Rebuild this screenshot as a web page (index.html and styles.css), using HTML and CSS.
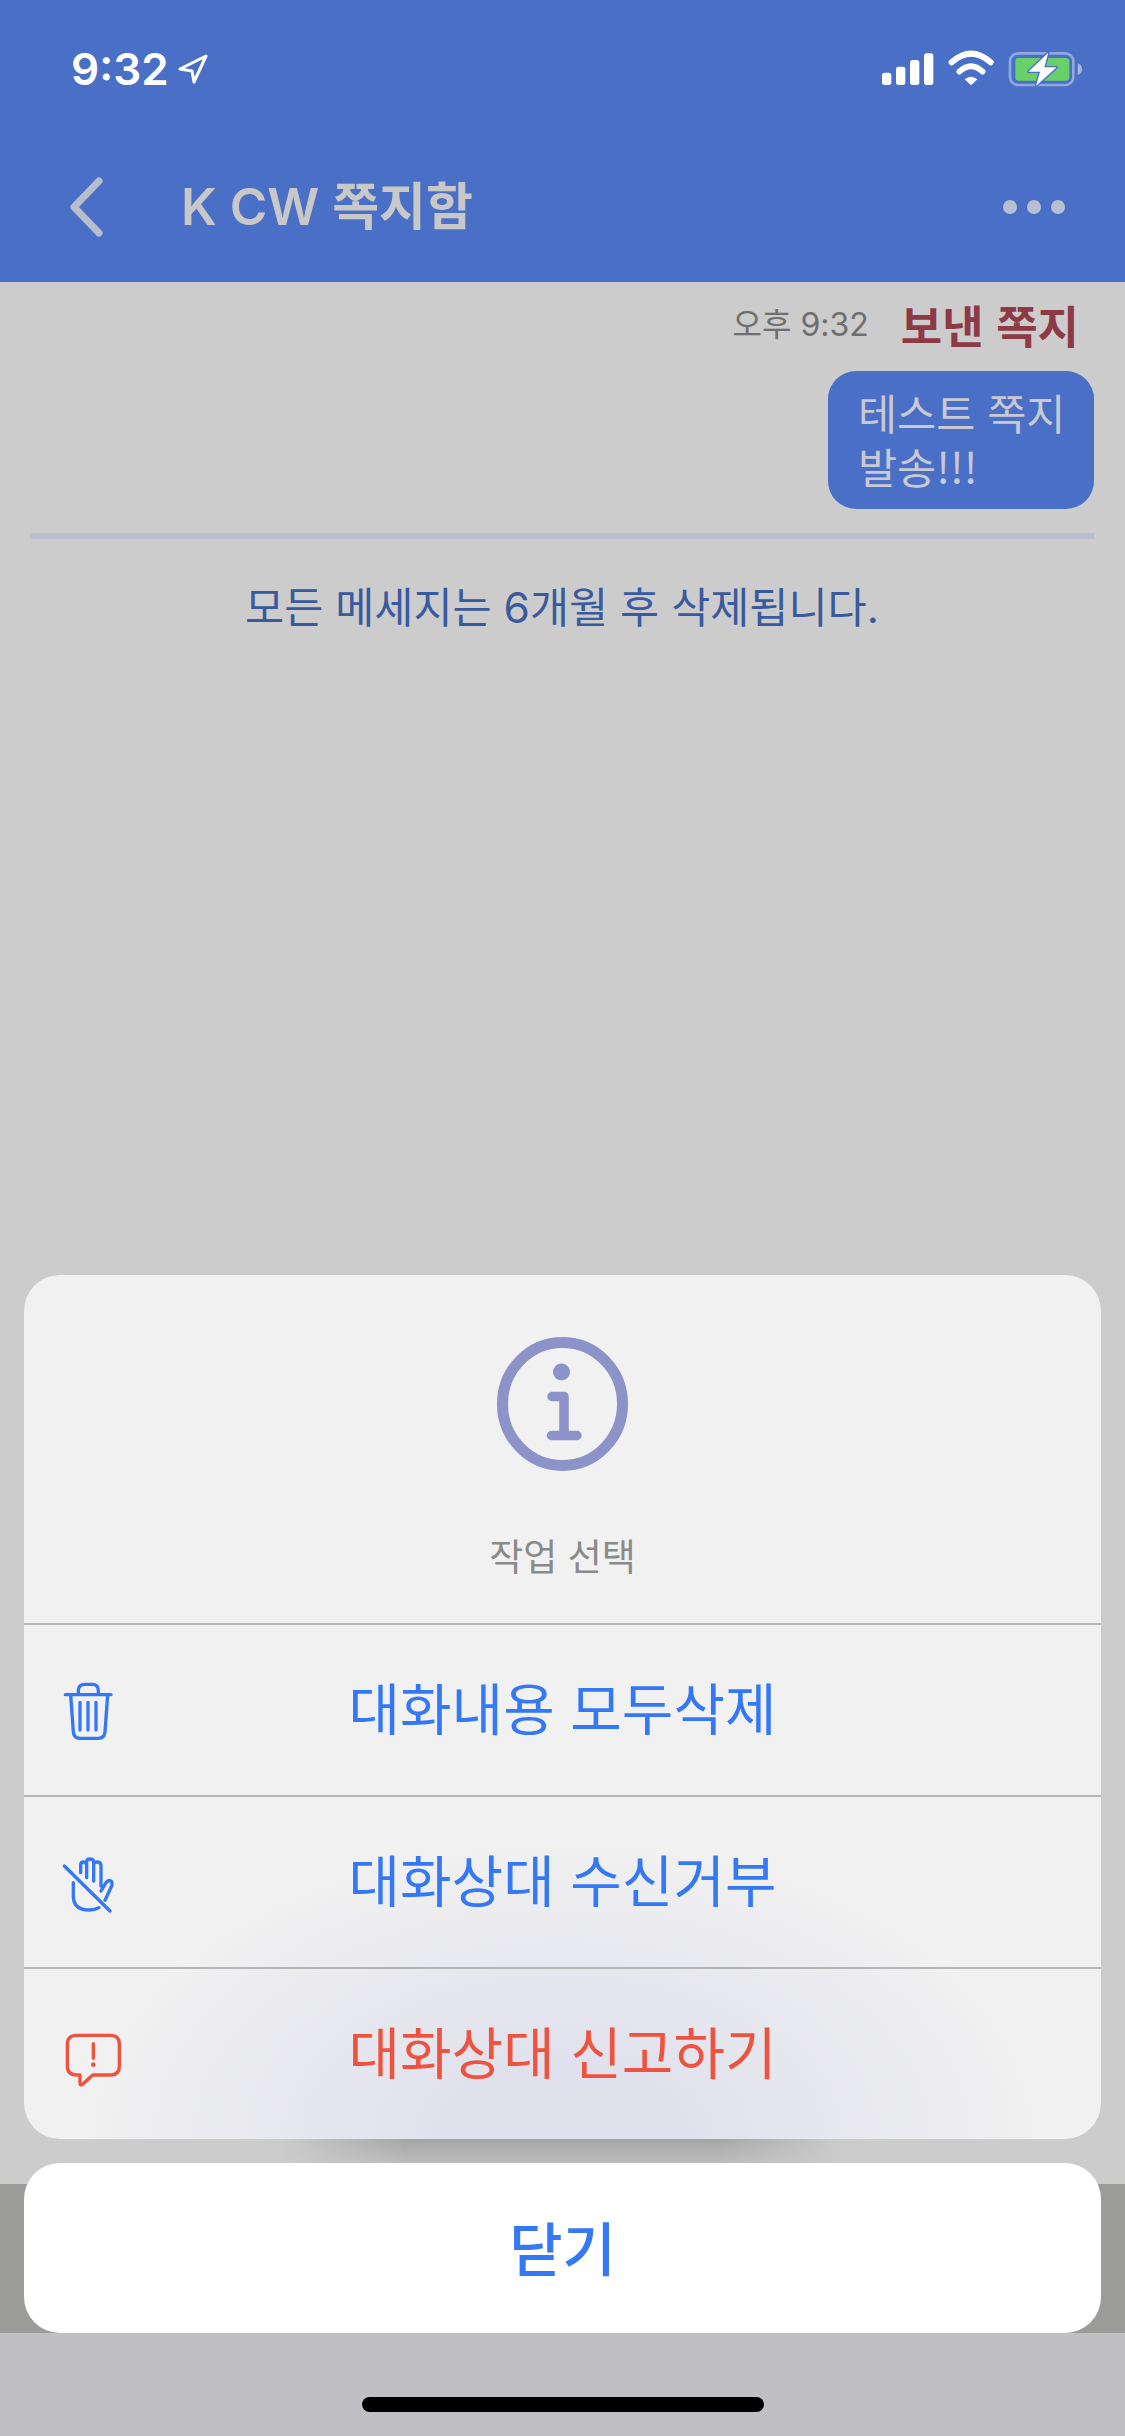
FILE: index.html
```html
<!DOCTYPE html>
<html lang="ko">

<head>
    <meta charset="UTF-8">
    <meta name="viewport" content="width=device-width, initial-scale=1.0">
    <title>K CW 쪽지함</title>
    <link rel="stylesheet" href="styles.css">
</head>

<body>
    <div class="screen">
        <header class="header">
            <div class="status-bar">
                <div class="status-time">
                    <span>9:32</span>
                    <svg class="location" viewBox="0 0 30 30"><path d="M28 2 L2 15 L14 17 L16 28 Z" /></svg>
                </div>
                <svg class="status-icons" viewBox="0 0 720 210">
                    <rect x="66" y="128" width="28" height="37" rx="8" fill="#fff" />
                    <rect x="108" y="110" width="28" height="55" rx="8" fill="#fff" />
                    <rect x="150" y="90" width="28" height="75" rx="8" fill="#fff" />
                    <rect x="192" y="70" width="28" height="95" rx="8" fill="#fff" />
                    <path d="M275 97 Q333 45 392 97" fill="none" stroke="#fff" stroke-width="18" stroke-linecap="round" />
                    <path d="M298 125 Q333 92 368 125" fill="none" stroke="#fff" stroke-width="17" stroke-linecap="round" />
                    <path d="M314 148 Q333 132 352 148 L333 166 Z" fill="#fff" />
                    <rect x="450" y="70" width="190" height="95" rx="24" fill="none" stroke="#fff" stroke-opacity=".4" stroke-width="8" />
                    <rect x="466" y="84" width="162" height="68" rx="10" fill="#68d068" />
                    <path d="M653 100 Q666 105 666 118 Q666 130 653 135 Z" fill="#fff" fill-opacity=".5" />
                    <path d="M565 68 L505 125 L540 125 L528 168 L590 112 L553 112 Z" fill="#fff" stroke="#4a6fc7" stroke-width="8" paint-order="stroke" stroke-linejoin="round" />
                </svg>
            </div>
            <nav class="nav-bar">
                <svg class="back" viewBox="0 0 33 60"><path d="M29 4 L4 30 L29 56" /></svg>
                <h1 class="title">K CW 쪽지함</h1>
                <div class="more"><i></i><i></i><i></i></div>
            </nav>
        </header>

        <main class="content">
            <div class="message-meta">
                <span class="message-time">오후 9:32</span>
                <span class="message-label">보낸 쪽지</span>
            </div>
            <div class="bubble">테스트 쪽지<br>발송!!!</div>
            <div class="divider"></div>
            <p class="notice">모든 메세지는 6개월 후 삭제됩니다.</p>
        </main>

        <div class="band"></div>
        <footer class="home-area"><div class="home-indicator"></div></footer>

        <div class="action-sheet">
            <div class="sheet-panel">
                <div class="sheet-head">
                    <svg class="info-icon" viewBox="0 0 131 134">
                        <ellipse cx="65.5" cy="67" rx="60" ry="61.5" fill="none" stroke="#8b93c8" stroke-width="11" />
                        <circle cx="64.5" cy="35" r="8.5" fill="#8b93c8" />
                        <path d="M55 59.5 H67 V98.5 M54.5 98.5 H80" fill="none" stroke="#8b93c8" stroke-width="9.5" stroke-linecap="round" stroke-linejoin="round" />
                    </svg>
                    <div class="sheet-title">작업 선택</div>
                </div>
                <div class="sheet-row">
                    <svg class="row-icon" viewBox="0 0 360 360">
                        <path d="M106 134 H243 M145 134 V122 Q145 103 165 103 H187 Q205 103 205 122 V134 M122 134 L130 245 Q131 265 150 265 H205 Q224 265 225 245 L233 134 M150 157 V240 M174 157 V240 M198 157 V240" />
                    </svg>
                    <span>대화내용 모두삭제</span>
                </div>
                <div class="sheet-row">
                    <svg class="row-icon" viewBox="0 -27 360 360">
                        <path d="M130 155 V195 Q130 237 178 237 Q195 237 207 230 M152 125 V103 Q152 93 160 93 Q169 93 170 103 V140 M170 103 V92 Q170 84 180 84 Q190 84 191 92 V150 M191 100 Q192 93 202 93 Q212 93 213 103 V165 M213 180 L228 155 Q236 145 243 150 Q248 155 245 165 L225 208 M103 105 L240 240" />
                    </svg>
                    <span>대화상대 수신거부</span>
                </div>
                <div class="sheet-row danger">
                    <svg class="row-icon" viewBox="0 -21 360 360">
                        <path d="M140 103 H242 Q268 103 268 130 V195 Q268 222 242 222 H188 L158 250 Q150 255 150 245 V222 H140 Q112 222 112 195 V130 Q112 103 140 103 Z M190 128 V172" />
                        <circle cx="190" cy="191" r="7" />
                    </svg>
                    <span>대화상대 신고하기</span>
                </div>
            </div>
            <button class="sheet-close">닫기</button>
        </div>
    </div>
</body>

</html>
```

FILE: styles.css
```css
* {
    box-sizing: border-box;
}

body {
    margin: 0;
    font-family: "Noto Sans CJK KR", "Noto Sans", sans-serif;
    background-color: #ccc;
}

.screen {
    position: relative;
    display: flex;
    flex-direction: column;
    width: 1125px;
    height: 2436px;
    overflow: hidden;
}

/* header */
.header {
    height: 282px;
    background-color: #4a6fc7;
}

.status-bar {
    display: flex;
    justify-content: space-between;
    height: 132px;
    padding: 30px 0 0 71px;
}

.status-time {
    display: flex;
    align-items: center;
    gap: 9px;
    height: 78px;
    font-family: Inter, sans-serif;
    font-size: 44px;
    font-weight: 600;
    color: #fff;
}

.location {
    width: 30px;
    height: 30px;
}

.location path {
    fill: none;
    stroke: #fff;
    stroke-width: 3;
    stroke-linejoin: round;
}

.status-icons {
    width: 240px;
    height: 70px;
    margin-right: 25px;
}

.nav-bar {
    display: flex;
    align-items: center;
    height: 150px;
    padding: 0 60px 0 70px;
}

.back {
    width: 33px;
    height: 60px;
}

.back path {
    fill: none;
    stroke: #b8bdcc;
    stroke-width: 7;
    stroke-linecap: round;
    stroke-linejoin: round;
}

.title {
    margin: 0 0 1px 78px;
    font-family: Inter, "Noto Sans CJK KR", sans-serif;
    font-size: 51px;
    font-weight: 600;
    line-height: 64px;
    color: #c8c8c8;
}

.more {
    display: flex;
    gap: 10px;
    margin-left: auto;
}

.more i {
    width: 14px;
    height: 14px;
    border-radius: 50%;
    background-color: #b8bfd3;
}

/* messages */
.content {
    display: flex;
    flex-direction: column;
    align-items: flex-end;
    height: 1902px;
    padding: 10px 31px 0 30px;
}

.message-meta {
    display: flex;
    align-items: center;
    gap: 32px;
    height: 66px;
    padding-right: 15px;
    line-height: 60px;
}

.message-time {
    font-family: Inter, "Noto Sans CJK KR", sans-serif;
    font-size: 32px;
    color: #6f6f6f;
}

.message-label {
    font-size: 45px;
    font-weight: 700;
    color: #8e3a46;
}

.bubble {
    width: 266px;
    margin-top: 13px;
    padding: 14px 30px 16px;
    border-radius: 28px;
    font-size: 42.5px;
    line-height: 54px;
    white-space: nowrap;
    color: #c8c9d2;
    background-color: #4a6fc7;
}

.divider {
    width: 100%;
    height: 6px;
    margin-top: 24px;
    background-color: #b8c0d0;
}

.notice {
    align-self: center;
    margin: 35px 0 0;
    font-family: Inter, "Noto Sans CJK KR", sans-serif;
    font-size: 42.5px;
    color: #3a5a9e;
}

.band {
    height: 149px;
    background-color: #9b9b99;
}

.home-area {
    display: flex;
    justify-content: center;
    flex: 1;
    padding-top: 64px;
    background-color: #c0bfc4;
}

.home-indicator {
    width: 402px;
    height: 15px;
    border-radius: 8px;
    background-color: #000;
}

/* action sheet */
.action-sheet {
    position: absolute;
    left: 24px;
    right: 24px;
    bottom: 103px;
}

.sheet-panel {
    position: relative;
    border-radius: 36px;
    background: radial-gradient(ellipse 480px 300px at 50% 100%, #e0e1ec 25%, #f1f1f1 100%);
    background-color: #f1f1f1;
}

.sheet-panel::after {
    content: "";
    position: absolute;
    top: 100%;
    left: 258px;
    width: 560px;
    height: 24px;
    background: linear-gradient(#a6a6a6, #bcbcbc);
    -webkit-mask-image: linear-gradient(to right, transparent, #000 22%, #000 78%, transparent);
}

.sheet-head {
    display: flex;
    flex-direction: column;
    align-items: center;
    height: 348px;
    padding-top: 62px;
}

.info-icon {
    width: 131px;
    height: 134px;
}

.sheet-title {
    margin-top: 58px;
    font-size: 37px;
    line-height: 52px;
    color: #8a8a8a;
}

.sheet-row {
    display: grid;
    grid-template-columns: 1fr auto 1fr;
    align-items: center;
    height: 172px;
    border-top: 2px solid #b5b5b5;
    font-size: 56px;
    color: #3478f6;
}

.sheet-row span {
    margin-bottom: 10px;
}

.sheet-row .row-icon {
    width: 120px;
    height: 120px;
    margin-left: 6px;
    fill: none;
    stroke: currentColor;
    stroke-width: 10;
    stroke-linecap: round;
    stroke-linejoin: round;
}

.sheet-row .row-icon circle {
    fill: currentColor;
    stroke: none;
}

.sheet-row.danger {
    color: #ee5340;
}

.sheet-close {
    display: block;
    width: 100%;
    height: 170px;
    margin-top: 24px;
    padding-bottom: 6px;
    border: none;
    border-radius: 36px;
    font-family: inherit;
    font-size: 58px;
    font-weight: 500;
    color: #3478f6;
    background-color: #fff;
}
```
